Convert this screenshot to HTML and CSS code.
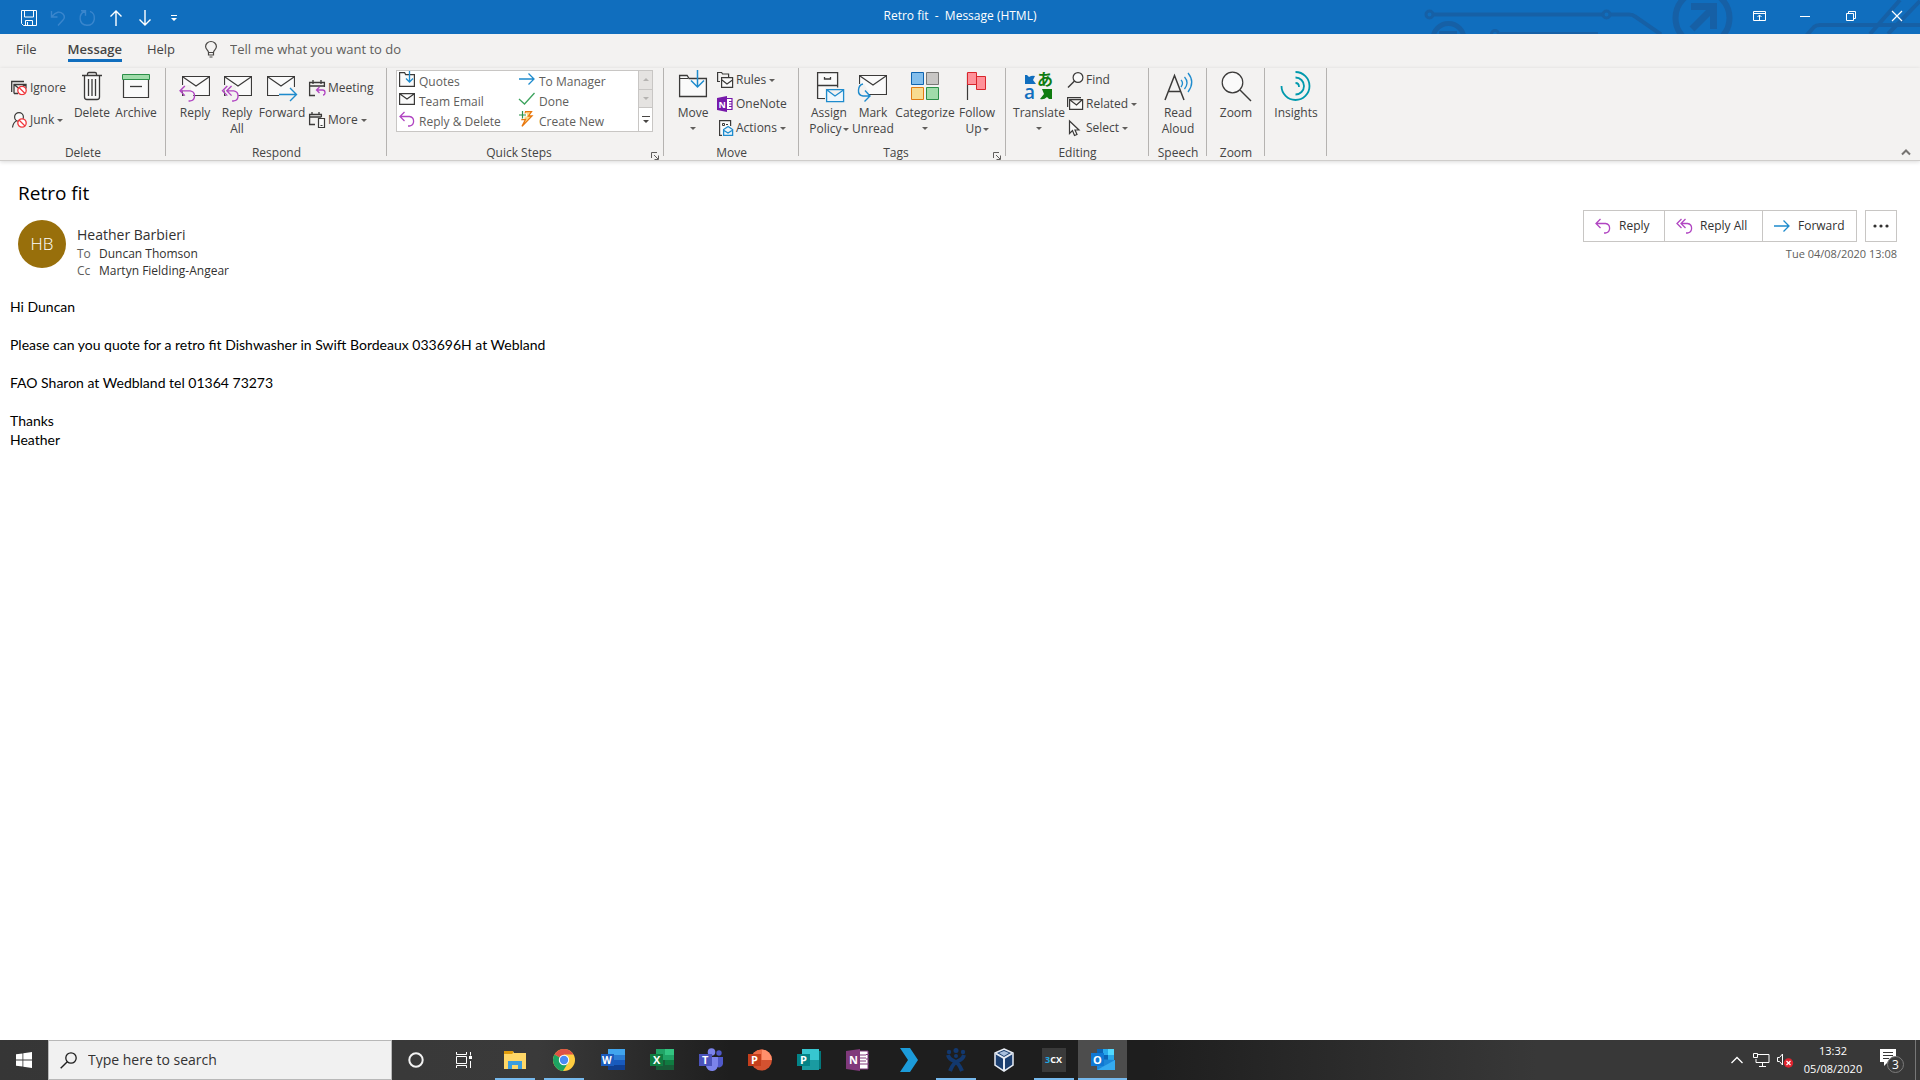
FILE: index.html
```html
<!DOCTYPE html>
<html lang="en">
<head>
<meta charset="utf-8">
<title>Retro fit - Message (HTML)</title>
<link rel="stylesheet" href="styles.css">
</head>
<body>
<svg class="defs" aria-hidden="true">
  <symbol id="reply" viewBox="0 0 16 16"><path d="M5.500 1 1 5.500l4.500 4.500M1 5.500h9.500a4.800 4.800 0 0 1 0 9.500h-1.500" fill="none" stroke="#b146c2" stroke-width="1.300"/></symbol>
  <symbol id="reply-all" viewBox="0 0 17 16"><path d="M5.500 1 1 5.500l4.500 4.500M9.500 1 5 5.500l4.500 4.500M5 5.500h6.500a4.800 4.800 0 0 1 0 9.500h-1.500" fill="none" stroke="#b146c2" stroke-width="1.300"/></symbol>
  <symbol id="forward" viewBox="0 0 16 16"><path d="M0 8h15M9.500 2.500 15 8l-5.500 5.500" fill="none" stroke="#1e8bcd" stroke-width="1.300"/></symbol>
  <symbol id="ban" viewBox="0 0 10 10"><circle cx="5" cy="5" r="4.200" fill="#fff" stroke="#f0373c" stroke-width="1.300"/><path d="m2 2 6 6" stroke="#f0373c" stroke-width="1.300"/></symbol>
  <symbol id="envelope" viewBox="0 0 28 20"><path d="M.5.5h27v19H.5z" fill="#fafafa" stroke="#3b3a39" stroke-width="1.200"/><path d="m1 1 13 9L27 1" fill="none" stroke="#3b3a39" stroke-width="1.200"/></symbol>
  <symbol id="launcher" viewBox="0 0 8 8"><path d="M.5 6V.5H6M3 3l4 4M7.500 3.500v4h-4" fill="none" stroke="#605e5c"/></symbol>
</svg>

<header class="titlebar">
  <svg class="titlebar-art" width="520" height="34" viewBox="0 0 520 34" aria-hidden="true">
    <g fill="none" stroke="#1660a6" stroke-width="4">
      <circle cx="29.500" cy="14.500" r="3.500" stroke-width="3"/><path d="M34 14.500h168M211 14.500h18q4 0 6 2l26 18"/><circle cx="206.500" cy="14.500" r="3.500" stroke-width="3"/>
      <circle cx="48.500" cy="39" r="15.500" stroke-width="5"/><path d="M39 32.500h18" stroke-width="3"/>
      <circle cx="95" cy="34" r="3.500" stroke-width="3"/><path d="M100 34h98"/>
      <circle cx="302.500" cy="18" r="27" stroke-width="6"/><path d="m292 29 20-20" stroke-width="7"/><path d="M291 6.500h22.500V29" stroke-width="7"/>
      <path d="m406 36 8-9q2-2 6-2h100M470 34l30-34M488 34l32-33"/>
    </g>
  </svg>
  <div class="quick-access">
    <button aria-label="Save"><svg width="16" height="16" viewBox="0 0 16 16"><path d="M.5.5h15v15h-13l-2-2zM3.500 1v6h9V1M4.500 15.500v-5h7v5M6.500 12v3" fill="none" stroke="#fff"/></svg></button>
    <button aria-label="Undo"><svg width="16" height="16" viewBox="0 0 16 16"><path d="M1.500 1v6h6M2 6.500C6 1.500 10 1 13 4c2.500 3 1 5 0 6L8 15.500" fill="none" stroke="#3a86cd" stroke-width="1.400"/></svg></button>
    <button aria-label="Redo"><svg width="16" height="16" viewBox="0 0 16 16"><path d="M2 .7h4.500v5M6 1C-1 4-.5 15 8 15.300c9 0 9.500-12 3-14" fill="none" stroke="#3a86cd" stroke-width="1.400"/></svg></button>
    <button aria-label="Previous item"><svg width="12" height="16" viewBox="0 0 12 16"><path d="M6 16V1M.5 6.500 6 1l5.500 5.500" fill="none" stroke="#fff" stroke-width="1.400"/></svg></button>
    <button aria-label="Next item"><svg width="12" height="16" viewBox="0 0 12 16"><path d="M6 0v15M.5 9.500 6 15l5.500-5.500" fill="none" stroke="#fff" stroke-width="1.400"/></svg></button>
    <button aria-label="Customize Quick Access Toolbar"><svg width="6" height="6" viewBox="0 0 6 6"><path d="M0 0h6v1H0zM0 3h6L3 6z" fill="#fff"/></svg></button>
  </div>
  <h1 class="window-title">Retro fit &nbsp;-&nbsp; Message (HTML)</h1>
  <div class="window-controls">
    <button aria-label="Ribbon display options"><svg width="13" height="10" viewBox="0 0 13 10"><path d="M.5.5h12v9H.5zM1 2.500h11M6.500 9V4M4.500 6l2-2 2 2" fill="none" stroke="#fff"/></svg></button>
    <button aria-label="Minimize"><svg width="10" height="10" viewBox="0 0 10 10"><path d="M0 5.500h10" stroke="#fff"/></svg></button>
    <button aria-label="Restore"><svg width="10" height="10" viewBox="0 0 10 10"><path d="M.5 2.500h7v7h-7zM2.500 2V.5h7v7H8" fill="none" stroke="#fff"/></svg></button>
    <button aria-label="Close"><svg width="10" height="10" viewBox="0 0 10 10"><path d="m0 0 10 10M10 0 0 10" stroke="#fff" stroke-width="1.200"/></svg></button>
  </div>
</header>

<nav class="tabs">
  <button class="tab">File</button>
  <button class="tab tab-active">Message</button>
  <button class="tab">Help</button>
  <label class="tell-me">
    <svg width="12" height="17" viewBox="0 0 12 17"><path d="M3.500 11.500C3.500 9 .6 8.500.6 5.500a5.400 5 0 0 1 10.800 0c0 3-2.900 3.500-2.900 6zM3.500 12v2h5v-2M4.500 16h3" fill="none" stroke="#484644" stroke-width="1.200"/></svg>
    <input type="text" placeholder="Tell me what you want to do">
  </label>
</nav>

<section class="ribbon" aria-label="Ribbon">
  <div class="group g-delete">
    <div class="tools">
      <div class="stack stack-two">
        <button class="small"><svg width="17" height="16" viewBox="0 0 17 16"><path d="M.7 12V1.500H13M3 13.500v-9h12v4M3 4.500l5 4 7-4M3 13.500h4" fill="none" stroke="#3b3a39" stroke-width="1.300"/><use href="#ban" x="6" y="5.500" width="10" height="10"/></svg>Ignore</button>
        <button class="small"><svg width="17" height="16" viewBox="0 0 17 16"><circle cx="8" cy="5" r="4.400" fill="#fafafa" stroke="#3b3a39" stroke-width="1.200"/><path d="M5.500 9C3 10 2 12 1.500 15.500" fill="none" stroke="#3b3a39" stroke-width="1.200"/><use href="#ban" x="6" y="6" width="10" height="10"/></svg>Junk<i class="caret"></i></button>
      </div>
      <button class="large w44"><svg width="32" height="32" viewBox="0 0 32 32"><path d="M8.500 5.500V27q0 2.500 2.500 2.500h10q2.500 0 2.500-2.500V5.500" fill="#fafafa" stroke="#3b3a39" stroke-width="1.300"/><path d="M6 5.500h20M11.500 5V4q0-1.500 1.500-1.500h6q1.500 0 1.500 1.500v1M12.500 9v17M16 9v17M19.500 9v17" fill="none" stroke="#3b3a39" stroke-width="1.300"/></svg>Delete</button>
      <button class="large w44"><svg width="32" height="32" viewBox="0 0 32 32"><path d="M3.500 9.500h25v18h-25z" fill="#fafafa" stroke="#3b3a39" stroke-width="1.200"/><path d="M2.500 4.500h27v5h-27z" fill="#a0dcaa" stroke="#2b8f48"/><path d="M10 16.500h12" stroke="#3b3a39" stroke-width="1.300"/></svg>Archive</button>
    </div>
    <div class="group-label"><span>Delete</span></div>
  </div>
  <div class="group g-respond">
    <div class="tools">
      <button class="large w42"><svg width="32" height="32" viewBox="0 0 32 32"><use href="#envelope" x="3" y="6" width="28" height="20"/><path d="M2 15h10v6l3 6H5z" fill="#f3f2f1"/><use href="#reply" x="0" y="15" width="17" height="17"/></svg>Reply</button>
      <button class="large w42"><svg width="32" height="32" viewBox="0 0 32 32"><use href="#envelope" x="3" y="6" width="28" height="20"/><path d="M2 15h13v6l3 6H5z" fill="#f3f2f1"/><use href="#reply-all" x="0" y="15" width="19" height="17"/></svg>Reply<br>All</button>
      <button class="large w48"><svg width="32" height="32" viewBox="0 0 32 32"><use href="#envelope" x="1" y="6" width="28" height="20"/><path d="M13 23h13l-2-6h6v13H13z" fill="#f3f2f1"/><path d="M13 24.500h17M24 18l6.500 6.500L24 31" fill="none" stroke="#1e8bcd" stroke-width="1.400"/></svg>Forward</button>
      <div class="stack stack-two">
        <button class="small"><svg width="17" height="16" viewBox="0 0 17 16"><path d="M6 15.500H.6v-13h14.800V7M.6 6h14.800M4 0v4M12 0v4" fill="none" stroke="#3b3a39" stroke-width="1.300"/><path d="m10.500 7-3 3 3 3M7.500 10h6q2.500 0 2.500 2.500T14 15" fill="none" stroke="#b146c2" stroke-width="1.300"/></svg>Meeting</button>
        <button class="small"><svg width="17" height="16" viewBox="0 0 17 16"><path d="M6 12.500H.6v-10h11.800V5M.6 5h11.800M3 0v3M10 0v3" fill="none" stroke="#3b3a39" stroke-width="1.300"/><path d="M9.500 6.500h6v9h-6zM11.500 13.500h2" fill="#fafafa" stroke="#3b3a39" stroke-width="1.200"/></svg>More<i class="caret"></i></button>
      </div>
    </div>
    <div class="group-label"><span>Respond</span></div>
  </div>
  <div class="group g-steps">
    <div class="tools">
      <div class="gallery">
        <div class="gallery-items">
          <button class="step"><svg width="16" height="16" viewBox="0 0 16 16"><path d="M.6 15.400V1.600h5l1 2h8.800v11.800z" fill="#fafafa" stroke="#3b3a39" stroke-width="1.200"/><path d="M10.500 0v11M7 7.500l3.500 3.500L14 7.500" fill="none" stroke="#1e8bcd" stroke-width="1.300"/></svg>Quotes</button>
          <button class="step"><svg width="16" height="16" viewBox="0 0 16 16"><use href="#forward" width="16" height="16"/></svg>To Manager</button>
          <button class="step"><svg width="16" height="16" viewBox="0 0 16 16"><path d="M.6 2.600h14.800v10.800H.6zM1 3l7 5 7-5" fill="#fafafa" stroke="#3b3a39" stroke-width="1.200"/></svg>Team Email</button>
          <button class="step"><svg width="16" height="16" viewBox="0 0 16 16"><path d="m0 8 5.500 5L15.500 2" fill="none" stroke="#3da35d" stroke-width="1.300"/></svg>Done</button>
          <button class="step"><svg width="16" height="16" viewBox="0 0 16 16"><use href="#reply" width="16" height="16"/></svg>Reply &amp; Delete</button>
          <button class="step"><svg width="16" height="16" viewBox="0 0 16 16"><path d="M6.500.6h6L9.500 5H13L3 15.400 6.500 8.500H3z" fill="#fcd98a" stroke="#e8760c" stroke-width="1.300"/><path d="M0 4h8M4 0v8" stroke="#fff" stroke-width="3"/><path d="M0 4h7M3.500 0v7.500" stroke="#2b8f48" stroke-width="1.200"/></svg>Create New</button>
        </div>
        <div class="gallery-scroll">
          <button disabled aria-label="Scroll up"><svg width="6" height="3" viewBox="0 0 6 3"><path d="M0 3h6L3 0z" fill="#b5b3b1"/></svg></button>
          <button disabled aria-label="Scroll down"><svg width="6" height="3" viewBox="0 0 6 3"><path d="M0 0h6L3 3z" fill="#b5b3b1"/></svg></button>
          <button aria-label="More quick steps"><svg width="8" height="8" viewBox="0 0 8 8"><path d="M0 0h8v1H0zM1 4h6L4 7z" fill="#484644"/></svg></button>
        </div>
      </div>
    </div>
    <div class="group-label"><span>Quick Steps</span><button class="launch" aria-label="Quick Steps settings"><svg width="8" height="8"><use href="#launcher"/></svg></button></div>
  </div>
  <div class="group g-move">
    <div class="tools">
      <button class="large w42"><svg width="32" height="32" viewBox="0 0 32 32"><path d="M2.600 26.500V5.500h7.500l2 3h17.300v18z" fill="#fafafa" stroke="#3b3a39" stroke-width="1.300"/><path d="M3 8.500h8" stroke="#3b3a39"/><path d="M20.500 0v17M14 10.500l6.500 6.500 6.500-6.500" fill="none" stroke="#1e8bcd" stroke-width="1.500"/></svg>Move<i class="caret caret-below"></i></button>
      <div class="stack">
        <button class="small"><svg width="17" height="16" viewBox="0 0 17 16"><path d="M3 9.500H.6v-9h4l1 1.500h6V5" fill="none" stroke="#3b3a39" stroke-width="1.200"/><path d="M4.600 5.600h11v9.800h-11z" fill="#fafafa" stroke="#3b3a39" stroke-width="1.200"/><path d="m5 8 5 4 5.500-4" fill="none" stroke="#3b3a39" stroke-width="1.200"/></svg>Rules<i class="caret"></i></button>
        <button class="small"><svg width="17" height="16" viewBox="0 0 17 16"><path d="M9 2.500h6v11H9zM12 5.500h3.500M12 8h3.500M12 10.500h3.500" fill="#fff" stroke="#7719aa" stroke-width="1.200"/><path d="m0 2 10-2v16L0 14z" fill="#7719aa"/><text x="1.500" y="11.500" class="logo-letter" font-size="9">N</text></svg>OneNote</button>
        <button class="small"><svg width="17" height="16" viewBox="0 0 17 16"><path d="M5 15.400H2.600V.6h11V6" fill="#fafafa" stroke="#3b3a39" stroke-width="1.200"/><path d="M5.500 3.500h2v2h-2zM9 4.500h2" fill="none" stroke="#3b3a39"/><path d="M6.600 15.400V9.500l4.500-3 4.500 3v5.900zM7 10.500l4 2.500 4-2.500" fill="#eaf5fc" stroke="#1e8bcd" stroke-width="1.300"/></svg>Actions<i class="caret"></i></button>
      </div>
    </div>
    <div class="group-label"><span>Move</span></div>
  </div>
  <div class="group g-tags">
    <div class="tools">
      <button class="large w44"><svg width="32" height="32" viewBox="0 0 32 32"><path d="M4.600 28.400V2.600h20v26z" fill="#fafafa" stroke="#3b3a39" stroke-width="1.300"/><path d="M5 15.500h19M11.500 7v2h6V7" fill="none" stroke="#3b3a39" stroke-width="1.300"/><path d="M12 17.500h20V32H12z" fill="#f3f2f1"/><path d="M13.600 19.600h17v12h-17zM14 20l8 6 8.500-6" fill="#eef7fd" stroke="#1e8bcd" stroke-width="1.300"/></svg>Assign<br><span>Policy<i class="caret"></i></span></button>
      <button class="large w44"><svg width="32" height="32" viewBox="0 0 32 32"><use href="#envelope" x="2" y="5" width="28" height="20"/><path d="M0 14h7l5 8v5H2z" fill="#f3f2f1"/><path d="M6 14C1 15-1 25 6 26h6M8 20.500l5 5.500-5.500 5.500" fill="none" stroke="#1e8bcd" stroke-width="1.400"/></svg>Mark<br>Unread</button>
      <button class="large w60"><svg width="32" height="32" viewBox="0 0 32 32"><path d="M2.500 2.500h12v12h-12z" fill="#83beec" stroke="#0f64b0"/><path d="M17.500 2.500h12v12h-12z" fill="#c8c6c4" stroke="#797775"/><path d="M2.500 17.500h12v12h-12z" fill="#f8db8f" stroke="#e07b12"/><path d="M17.500 17.500h12v12h-12z" fill="#a0dcaa" stroke="#2b8f48"/></svg>Categorize<i class="caret caret-below"></i></button>
      <button class="large w44"><svg width="32" height="32" viewBox="0 0 32 32"><path d="M6.500 3v27" stroke="#3b3a39" stroke-width="1.200"/><path d="M15.500 6.500h9v13h-9z" fill="#ff9199" stroke="#d8262c"/><path d="M6.500 2.500h9v12h-9z" fill="#ff9199" stroke="#d8262c"/></svg>Follow<br><span>Up<i class="caret"></i></span></button>
    </div>
    <div class="group-label"><span>Tags</span><button class="launch" aria-label="Tag settings"><svg width="8" height="8"><use href="#launcher"/></svg></button></div>
  </div>
  <div class="group g-editing">
    <div class="tools">
      <button class="large w50"><svg width="32" height="32" viewBox="0 0 32 32"><path d="M2 5h2l2 2q3-2 6-1l-2 4 3 4H2z" fill="#106ebe"/><path d="M19 19h10v10h-3l-2-2q-3 3-7 2l4-5z" fill="#107c10"/><text x="1" y="29" font-size="19" class="glyph-latin">a</text><text x="14" y="15" font-size="16" class="glyph-kana">あ</text></svg>Translate<i class="caret caret-below"></i></button>
      <div class="stack">
        <button class="small"><svg width="17" height="16" viewBox="0 0 17 16"><circle cx="11" cy="5.500" r="4.900" fill="#fafafa" stroke="#3b3a39" stroke-width="1.200"/><path d="M7.500 9 1 15.500" stroke="#3b3a39" stroke-width="1.400"/></svg>Find</button>
        <button class="small"><svg width="17" height="16" viewBox="0 0 17 16"><path d="M.6 11V1.600H14" fill="none" stroke="#3b3a39" stroke-width="1.200"/><path d="M2.600 3.600h13v9.800h-13zM3 4l6.500 5L15 4" fill="#fafafa" stroke="#3b3a39" stroke-width="1.200"/></svg>Related<i class="caret"></i></button>
        <button class="small"><svg width="17" height="16" viewBox="0 0 17 16"><path d="M2.500 1v12.500l3-3 2 5 2.500-1-2-4.500H12z" fill="#fafafa" stroke="#3b3a39" stroke-width="1.200"/></svg>Select<i class="caret"></i></button>
      </div>
    </div>
    <div class="group-label"><span>Editing</span></div>
  </div>
  <div class="group g-speech">
    <div class="tools">
      <button class="large w50"><svg width="32" height="32" viewBox="0 0 32 32"><path d="M3 30 12.500 5.500 22 30M6.500 21.500h12" fill="none" stroke="#3b3a39" stroke-width="1.500"/><path d="M19 10q3 3 0 7M22.500 7q5 5.500 0 12M26 3q7.500 9 0 19" fill="none" stroke="#1e8bcd" stroke-width="1.300"/></svg>Read<br>Aloud</button>
    </div>
    <div class="group-label"><span>Speech</span></div>
  </div>
  <div class="group g-zoom">
    <div class="tools">
      <button class="large w50"><svg width="32" height="32" viewBox="0 0 32 32"><circle cx="12.500" cy="12.500" r="10.300" fill="#fafafa" stroke="#3b3a39" stroke-width="1.200"/><path d="m20 20 11 11" stroke="#3b3a39" stroke-width="1.400"/></svg>Zoom</button>
    </div>
    <div class="group-label"><span>Zoom</span></div>
  </div>
  <div class="group g-insights">
    <div class="tools">
      <button class="large w50"><svg width="32" height="32" viewBox="0 0 32 32"><path d="M1.500 16a14 14 0 1 0 14-14M15.500 7.500a8.500 8.500 0 1 1 0 17M15.500 13q3.500 0 3.500 4" fill="none" stroke="#0099ad" stroke-width="1.800"/></svg>Insights</button>
    </div>
  </div>
  <button class="collapse" aria-label="Collapse the Ribbon"><svg width="10" height="6" viewBox="0 0 10 6"><path d="m1 5.500 4-4 4 4" fill="none" stroke="#767472" stroke-width="2"/></svg></button>
</section>

<main class="message">
  <h2 class="subject">Retro fit</h2>
  <div class="message-head">
    <div class="avatar">HB</div>
    <div class="people">
      <div class="sender">Heather Barbieri</div>
      <div class="recipient"><span>To</span>Duncan Thomson</div>
      <div class="recipient"><span>Cc</span>Martyn Fielding-Angear</div>
    </div>
    <div class="respond">
      <div class="respond-row">
        <div class="respond-buttons">
          <button class="r-reply"><svg width="17" height="16"><use href="#reply" width="16" height="16"/></svg>Reply</button>
          <button class="r-all"><svg width="17" height="16"><use href="#reply-all" width="17" height="16"/></svg>Reply All</button>
          <button class="r-forward"><svg width="17" height="16"><use href="#forward" width="16" height="16"/></svg>Forward</button>
        </div>
        <button class="r-more" aria-label="More actions"><svg width="16" height="4" viewBox="0 0 16 4"><g fill="#323130"><circle cx="2" cy="2" r="1.600"/><circle cx="8" cy="2" r="1.600"/><circle cx="14" cy="2" r="1.600"/></g></svg></button>
      </div>
      <time class="sent">Tue 04/08/2020 13:08</time>
    </div>
  </div>
  <div class="mail-body">
    <p>Hi Duncan</p>
    <p>Please can you quote for a retro fit Dishwasher in Swift Bordeaux 033696H at Webland</p>
    <p>FAO Sharon at Wedbland tel 01364 73273</p>
    <p>Thanks<br>Heather</p>
  </div>
</main>

<footer class="taskbar">
  <button class="start" aria-label="Start"><svg width="16" height="16" viewBox="0 0 16 16"><path d="M0 2.300 6.500 1.400v6.200H0zM7.300 1.300 16 0v7.600H7.300zM0 8.400h6.500v6.200L0 13.700zM7.300 8.400H16V16l-8.700-1.300z" fill="#fff"/></svg></button>
  <label class="search">
    <svg width="17" height="17" viewBox="0 0 17 17"><circle cx="11" cy="6" r="5.200" fill="none" stroke="#1f1f1f" stroke-width="1.300"/><path d="M7.300 9.700.7 16.300" stroke="#1f1f1f" stroke-width="1.400"/></svg>
    <input type="text" placeholder="Type here to search">
  </label>
  <button class="task-tool" aria-label="Cortana"><svg width="16" height="16" viewBox="0 0 16 16"><circle cx="8" cy="8" r="6.700" fill="none" stroke="#f2f2f2" stroke-width="2"/></svg></button>
  <button class="task-tool" aria-label="Task view"><svg width="17" height="16" viewBox="0 0 17 16"><path d="M.5 0v2.500h10V0M.5 16v-2.500h10V16M.5 4.500h10v7H.5zM14.500 0v3.500M14.500 9v7" fill="none" stroke="#fff"/><path d="M13 4h3v3h-3z" fill="#fff"/></svg></button>
  <div class="apps">
    <button class="app app-open" aria-label="File Explorer"><svg width="24" height="24" viewBox="0 0 24 24"><path d="M1 3h9l1 2h12v16H1z" fill="#ffd767"/><path d="M1 3h9v2l-1 1H1z" fill="#e09c0c"/><path d="M5 13h14v8h-4v-4H9v4H5z" fill="#3c9ddf"/></svg></button>
    <button class="app app-open" aria-label="Chrome"><svg width="24" height="24" viewBox="0 0 24 24"><circle cx="12" cy="12" r="11" fill="#ffcd40"/><path d="M12 12 2.500 6.500A11 11 0 0 1 21.500 6.500H12z" fill="#de5245"/><path d="M12 12 2.500 6.500A11 11 0 0 0 11 23l5.500-9z" fill="#1da362"/><circle cx="12" cy="12" r="5.200" fill="#fff"/><circle cx="12" cy="12" r="4.200" fill="#4b8bf4"/></svg></button>
    <button class="app" aria-label="Word"><svg width="24" height="24" viewBox="0 0 24 24"><path d="M7 1h17v6H7z" fill="#41a5ee"/><path d="M7 7h17v5H7z" fill="#2b7cd3"/><path d="M7 12h17v5H7z" fill="#185abd"/><path d="M7 17h17v5H7z" fill="#103f91"/><path d="M0 6h13v12H0z" fill="#1b5cbe"/><text x="1" y="16" font-size="10" class="logo-letter">W</text></svg></button>
    <button class="app" aria-label="Excel"><svg width="24" height="24" viewBox="0 0 24 24"><path d="M6 1h9v11H6z" fill="#21a366"/><path d="M15 1h9v6h-9z" fill="#33c481"/><path d="M15 7h9v5h-9z" fill="#21a366"/><path d="M6 12h18v10H6z" fill="#185c37"/><path d="M15 12h9v5h-9z" fill="#107c41"/><path d="M0 6h13v12H0z" fill="#107c41"/><text x="3" y="16" font-size="11" class="logo-letter">X</text></svg></button>
    <button class="app" aria-label="Teams"><svg width="24" height="24" viewBox="0 0 24 24"><circle cx="20" cy="5" r="2.700" fill="#5059c9"/><path d="M15 9h9v7a4 4 0 0 1-7 2z" fill="#5059c9"/><circle cx="12.500" cy="4" r="3.800" fill="#7b83eb"/><path d="M7 9h12v7a6 6 0 0 1-12 2z" fill="#7b83eb"/><path d="M0 6h13v12H0z" fill="#4b53bc"/><text x="3" y="16" font-size="11" class="logo-letter">T</text></svg></button>
    <button class="app" aria-label="PowerPoint"><svg width="24" height="24" viewBox="0 0 24 24"><circle cx="13.500" cy="12" r="10.500" fill="#d35230"/><path d="M13.500 1.500A10.500 10.500 0 0 1 24 12H13.500z" fill="#ff8f6b"/><path d="M13.500 1.500A10.500 10.500 0 0 0 3 12h10.500z" fill="#ed6c47"/><path d="M0 6h13v12H0z" fill="#c43e1c"/><text x="3" y="16" font-size="11" class="logo-letter">P</text></svg></button>
    <button class="app" aria-label="Publisher"><svg width="24" height="24" viewBox="0 0 24 24"><path d="M20 3h4v18h-4z" fill="#03787c"/><path d="M5 1h17v11H5z" fill="#37c6d0"/><path d="M5 12h17v10H5z" fill="#1a9ba1"/><path d="M0 6h13v12H0z" fill="#038387"/><text x="3" y="16" font-size="11" class="logo-letter">P</text></svg></button>
    <button class="app" aria-label="OneNote"><svg width="24" height="24" viewBox="0 0 24 24"><path d="M12 3h10v18H12z" fill="#fff" stroke="#80397b"/><path d="M14 7h6M14 10h6M14 13h6M14 16h6M20 6.500h3M20 11h3M20 16h3" stroke="#80397b"/><path d="M0 3 14 1v22L0 21z" fill="#80397b"/><text x="3" y="16" font-size="11" class="logo-letter">N</text></svg></button>
    <button class="app" aria-label="Remote tool"><svg width="24" height="24" viewBox="0 0 24 24"><path d="M5 0h10l8 12-8 12H5l8-12z" fill="#1c9bd9"/></svg></button>
    <button class="app app-open" aria-label="Jira"><svg width="24" height="24" viewBox="0 0 24 24"><g fill="none" stroke="#12386e" stroke-width="4"><path d="M4 7q1 4 6 6t8 10M20 7q-1 4-6 6T6 23"/></g><g fill="#12386e"><circle cx="12" cy="2.500" r="2.500"/><circle cx="5" cy="4" r="2.200"/><circle cx="19" cy="4" r="2.200"/><circle cx="12" cy="8" r="2"/></g></svg></button>
    <button class="app" aria-label="VirtualBox"><svg width="24" height="24" viewBox="0 0 24 24"><path d="m11 1 9 4v12l-9 6-9-6V5z" fill="#1c3f70" stroke="#e8edf5" stroke-width="1.500"/><path d="m3 5.500 8 4.500 8-4.500M11 10v13" fill="none" stroke="#e8edf5" stroke-width="2"/><path d="m6 5 5-2 5 2-5 3z" fill="#a9c0de"/></svg></button>
    <button class="app app-open" aria-label="3CX"><svg width="24" height="24" viewBox="0 0 24 24"><path d="M0 0h24v24H0z" fill="#3a3a3a"/><text x="3" y="15" font-size="9" class="logo-letter"><tspan fill="#22a7e0">3</tspan>CX</text></svg></button>
    <button class="app app-open app-active" aria-label="Outlook"><svg width="24" height="24" viewBox="0 0 24 24"><path d="M6 1h17v12H6z" fill="#0a63b5"/><path d="M12 1h5v6h-5zM17 7h6v5h-6z" fill="#28a8ea"/><path d="M17 1h6v6h-6z" fill="#50d9ff"/><path d="M6 11l18 1v10H6z" fill="#1b86d8"/><path d="m6 22 18-10v10z" fill="#35aaf0"/><path d="M0 5h13v13H0z" fill="#0f78d4"/><text x="2" y="16" font-size="11" class="logo-letter">O</text></svg></button>
  </div>
  <div class="tray">
    <button aria-label="Show hidden icons"><svg width="12" height="8" viewBox="0 0 12 8"><path d="m.5 7 5.500-5.500L11.500 7" fill="none" stroke="#fff" stroke-width="1.300"/></svg></button>
    <button aria-label="Network"><svg width="17" height="14" viewBox="0 0 17 14"><path d="M5 1.500h11v8H3V6M.5.500h4v4h-4zM9.500 9.500v4M6 13.500h7" fill="none" stroke="#fff"/></svg></button>
    <button aria-label="Volume muted"><svg width="17" height="15" viewBox="0 0 17 15"><path d="M.5 4.500h2l3-3.500v11l-3-3.500h-2z" fill="none" stroke="#fff"/><circle cx="11.500" cy="10" r="4.700" fill="#e0232e"/><path d="m9.500 8 4 4M13.500 8l-4 4" stroke="#fff" stroke-width="1.200"/></svg></button>
  </div>
  <button class="clock"><time>13:32</time><time>05/08/2020</time></button>
  <button class="notifications" aria-label="Notifications, 3 new"><svg width="26" height="26" viewBox="0 0 26 26"><path d="M1 2h16v13H9l-4 4v-4H1z" fill="#fff"/><path d="M4 5.500h10M4 8.500h10M4 11.500h6" stroke="#383838"/><circle cx="16.500" cy="17.500" r="8" fill="#3b3b3b" stroke="#7c7c7c"/><text x="13" y="22" font-size="12" class="badge-text">3</text></svg></button>
  <button class="show-desktop" aria-label="Show desktop"></button>
</footer>
</body>
</html>
```
FILE: styles.css
```css
* { box-sizing: border-box; }

body {
  margin: 0;
  min-height: 100vh;
  display: flex;
  flex-direction: column;
  background: #fff;
  color: #444;
  font-family: "Open Sans", "Noto Sans", sans-serif;
  font-size: 12px;
  line-height: 16px;
}

button {
  margin: 0;
  padding: 0;
  border: 0;
  background: none;
  color: inherit;
  font: inherit;
}

input {
  border: 0;
  padding: 0;
  background: none;
  font: inherit;
  outline: 0;
}

svg { display: block; flex: none; overflow: visible; }
.defs { position: absolute; width: 0; height: 0; }

/* Title bar */
.titlebar {
  position: relative;
  display: grid;
  grid-template-columns: 1fr auto 1fr;
  height: 34px;
  background: #106ebe;
  color: #fff;
}
.titlebar-art {
  position: absolute;
  top: 0;
  right: 0;
  overflow: hidden;
}
.quick-access { display: flex; padding: 2px 0 0 14px; }
.quick-access button {
  display: flex;
  align-items: center;
  justify-content: center;
  width: 29px;
  height: 32px;
}
.window-title {
  margin: 0;
  font-size: 12px;
  font-weight: 400;
  line-height: 32px;
}
.window-controls {
  position: relative;
  display: flex;
  justify-content: flex-end;
}
.window-controls button {
  display: flex;
  align-items: center;
  justify-content: center;
  width: 46px;
  height: 32px;
}

/* Tabs */
.tabs {
  display: flex;
  height: 34px;
  padding-left: 16px;
  background: #f3f2f1;
  font-size: 13px;
}
.tab {
  height: 28px;
  margin-right: 25px;
  padding-top: 4px;
  border-bottom: 3px solid transparent;
  line-height: 20px;
}
.tab:first-child { margin-right: 31px; }
.tab-active {
  border-color: #106ebe;
  font-weight: 600;
}
.tell-me {
  display: flex;
  gap: 13px;
  padding: 7px 0 0 5px;
}
.tell-me input {
  width: 240px;
  height: 16px;
  font-size: 13px;
}
.tell-me input::placeholder { color: #605e5c; opacity: 1; }

/* Ribbon */
.ribbon {
  display: flex;
  height: 93px;
  border-bottom: 1px solid #cfcdcb;
  background: #f3f2f1;
  box-shadow: 0 1px 4px rgba(0, 0, 0, .15);
}
.group {
  display: flex;
  flex-direction: column;
  background: linear-gradient(#b5b3b1, #b5b3b1) right top / 1px 88px no-repeat;
}
.g-delete { width: 166px; }
.g-respond { width: 221px; }
.g-steps { width: 277px; }
.g-move { width: 135px; }
.g-tags { width: 207px; }
.g-editing { width: 143px; }
.g-speech, .g-zoom { width: 58px; }
.g-insights { width: 62px; }

.tools {
  display: flex;
  height: 76px;
  padding-left: 8px;
}
.g-speech .tools, .g-zoom .tools, .g-insights .tools {
  justify-content: center;
  padding-left: 0;
}
.group-label {
  display: flex;
  height: 16px;
  line-height: 18px;
}
.group-label span { flex: 1; text-align: center; }
.launch {
  display: flex;
  align-items: flex-end;
  width: 13px;
}

.large {
  display: flex;
  flex-direction: column;
  align-items: center;
  padding-top: 2px;
  white-space: nowrap;
}
.large svg { margin-bottom: 3px; }
.w42 { width: 42px; }
.w44 { width: 44px; }
.w48 { width: 48px; }
.w50 { width: 50px; }
.w60 { width: 60px; }

.stack {
  display: flex;
  flex-direction: column;
  padding-left: 3px;
}
.small {
  display: flex;
  align-items: center;
  gap: 2px;
  height: 24px;
  white-space: nowrap;
}
.stack-two { gap: 8px; padding-top: 8px; }
.g-delete .stack { width: 62px; }

.caret {
  display: inline-block;
  margin-left: 1px;
  border: 3px solid transparent;
  border-top-color: #605e5c;
  border-bottom: 0;
  vertical-align: 2px;
}
.caret-below { margin: 6px 0 0; }

.gallery {
  display: flex;
  width: 257px;
  height: 62px;
  margin: 2px 0 0 1px;
  border: 1px solid #c8c6c4;
  background: #fff;
}
.gallery-items {
  display: grid;
  grid-template-columns: 120px 121px;
  grid-auto-rows: 20px;
  flex: 1;
}
.step {
  display: flex;
  gap: 4px;
  padding-left: 2px;
  line-height: 22px;
  color: #605e5c;
}
.gallery-scroll {
  display: grid;
  width: 15px;
  border-left: 1px solid #c8c6c4;
}
.gallery-scroll button {
  display: flex;
  align-items: center;
  justify-content: center;
}
.gallery-scroll button:disabled {
  border-bottom: 1px solid #c8c6c4;
  background: #e5e3e1;
}
.collapse {
  align-self: flex-end;
  margin: 0 9px 5px auto;
}

/* Message */
.message { flex: 1; color: #000; }
.subject {
  margin: 0;
  padding: 19px 18px 0;
  font-size: 19px;
  font-weight: 400;
  line-height: 26px;
}
.message-head {
  display: flex;
  padding: 4px 23px 0 18px;
}
.avatar {
  width: 48px;
  height: 48px;
  margin-top: 10px;
  border-radius: 50%;
  background: #986f0b;
  color: #fff;
  font-size: 17px;
  font-weight: 300;
  line-height: 48px;
  text-align: center;
}
.people {
  flex: 1;
  padding: 15px 0 0 11px;
  color: #323130;
  line-height: 17px;
}
.sender { font-size: 14px; line-height: 20px; }
.recipient { display: flex; }
.recipient span { width: 22px; color: #605e5c; }
.respond { display: flex; flex-direction: column; align-items: flex-end; }
.respond-row { display: flex; gap: 8px; }
.respond-buttons {
  display: flex;
  border: 1px solid #c8c6c4;
}
.respond-buttons button {
  display: flex;
  align-items: center;
  gap: 7px;
  height: 30px;
  padding-left: 11px;
  color: #323130;
}
.respond-buttons button + button { border-left: 1px solid #c8c6c4; }
.r-reply { width: 80px; }
.r-all { width: 98px; }
.r-forward { width: 94px; }
.r-more {
  display: flex;
  align-items: center;
  justify-content: center;
  width: 32px;
  height: 32px;
  border: 1px solid #c8c6c4;
}
.sent { margin-top: 4px; color: #605e5c; font-size: 11px; }

.mail-body {
  padding: 18px 10px;
  font-family: Lato, "Open Sans", sans-serif;
  font-size: 14px;
  line-height: 19px;
}
.mail-body p { margin: 0 0 19px; }

/* Taskbar */
.taskbar {
  display: flex;
  height: 40px;
  background: linear-gradient(90deg, #363636 0, #3a3a3a 28%, #1e1e1e 38%, #1e1e1e 60%, #383838 80%);
  color: #fff;
}
.taskbar button {
  display: flex;
  align-items: center;
  justify-content: center;
}
.start, .task-tool { width: 48px; }
.search {
  display: flex;
  align-items: center;
  gap: 11px;
  width: 344px;
  padding-left: 11px;
  border: 1px solid #b8b8b8;
  background: #f1f1f1;
}
.search input { flex: 1; font-size: 14px; }
.search input::placeholder { color: #333; opacity: 1; }
.apps { display: flex; padding-left: 2px; }
.app {
  width: 49px;
  height: 40px;
  background: linear-gradient(#76b9ed, #76b9ed) center bottom / 0 2px no-repeat;
}
.app-open { background-size: 40px 2px; }
.app-active {
  background-color: #4d4d4d;
  background-size: 100% 2px;
}
.tray {
  display: flex;
  margin-left: auto;
}
.tray button { width: 24px; }
.taskbar .clock {
  flex-direction: column;
  gap: 2px;
  width: 72px;
  font-size: 11px;
}
.notifications { width: 46px; }
.show-desktop {
  width: 5px;
  border-left: 1px solid #777;
}

.logo-letter { fill: #fff; font-family: "Open Sans", sans-serif; font-weight: 700; }
.badge-text { fill: #fff; font-family: "Open Sans", sans-serif; }
.glyph-latin { fill: #106ebe; font-family: "Open Sans", sans-serif; font-weight: 600; }
.glyph-kana { fill: #107c10; font-family: "Noto Sans CJK JP", sans-serif; font-weight: 700; }
```
